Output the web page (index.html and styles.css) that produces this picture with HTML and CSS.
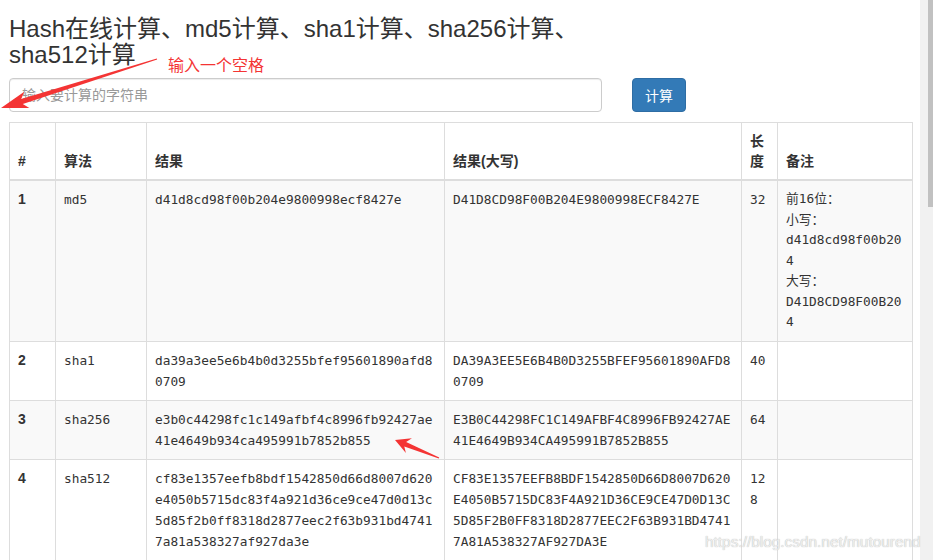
FILE: index.html
```html
<!DOCTYPE html>
<html lang="zh">
<head>
<meta charset="utf-8">
<title>Hash在线计算</title>
<link rel="stylesheet" href="styles.css">
</head>
<body>
<div class="page">
  <h3 class="title">Hash在线计算、md5计算、sha1计算、sha256计算、sha512计算</h3>
  <div class="form-row">
    <input class="text-input" type="text" placeholder="输入要计算的字符串">
    <button class="btn" type="button">计算</button>
  </div>
  <table class="hash-table">
    <colgroup>
      <col class="c-num">
      <col class="c-alg">
      <col class="c-res">
      <col class="c-up">
      <col class="c-len">
      <col class="c-note">
    </colgroup>
    <thead>
      <tr><th>#</th><th>算法</th><th>结果</th><th>结果(大写)</th><th>长度</th><th>备注</th></tr>
    </thead>
    <tbody>
      <tr class="odd">
        <th>1</th>
        <td>md5</td>
        <td>d41d8cd98f00b204e9800998ecf8427e</td>
        <td>D41D8CD98F00B204E9800998ECF8427E</td>
        <td>32</td>
        <td class="remark">前16位：<br>小写：<br>d41d8cd98f00b204<br>大写：<br>D41D8CD98F00B204</td>
      </tr>
      <tr>
        <th>2</th>
        <td>sha1</td>
        <td>da39a3ee5e6b4b0d3255bfef95601890afd80709</td>
        <td>DA39A3EE5E6B4B0D3255BFEF95601890AFD80709</td>
        <td>40</td>
        <td></td>
      </tr>
      <tr class="odd">
        <th>3</th>
        <td>sha256</td>
        <td>e3b0c44298fc1c149afbf4c8996fb92427ae41e4649b934ca495991b7852b855</td>
        <td>E3B0C44298FC1C149AFBF4C8996FB92427AE41E4649B934CA495991B7852B855</td>
        <td>64</td>
        <td></td>
      </tr>
      <tr>
        <th>4</th>
        <td>sha512</td>
        <td>cf83e1357eefb8bdf1542850d66d8007d620e4050b5715dc83f4a921d36ce9ce47d0d13c5d85f2b0ff8318d2877eec2f63b931bd47417a81a538327af927da3e</td>
        <td>CF83E1357EEFB8BDF1542850D66D8007D620E4050B5715DC83F4A921D36CE9CE47D0D13C5D85F2B0FF8318D2877EEC2F63B931BD47417A81A538327AF927DA3E</td>
        <td>128</td>
        <td></td>
      </tr>
    </tbody>
  </table>

  <div class="scrollbar"><div class="thumb"></div></div>
  <div class="note-label">输入一个空格</div>
  <svg class="arrows" width="933" height="560" viewBox="0 0 933 560" aria-hidden="true">
    <polygon points="0,-0.6 141.5,-2.6 136.5,-8.5 163.5,0 136.5,8.5 141.5,2.6 0,0.6" transform="translate(157 59) rotate(162.56)" fill="#f43434"/>
    <polygon points="0,-0.6 36.5,-2.4 32.5,-8 47.5,0 32.5,8 36.5,2.4 0,0.6" transform="translate(439 458) rotate(202.25)" fill="#f43434"/>
  </svg>
  <div class="watermark">https://blog.csdn.net/mutourend</div>
</div>
</body>
</html>
```

FILE: styles.css
```css
html, body {
  margin: 0;
  padding: 0;
  background: #fff;
}

body {
  font-family: "Liberation Sans", "Noto Sans CJK SC", Arial, sans-serif;
  font-size: 14px;
  line-height: 20px;
  color: #333;
  overflow: hidden;
}

.page {
  position: relative;
  width: 933px;
  height: 560px;
  box-sizing: border-box;
  padding: 16px 0 0 9px;
  overflow: hidden;
}

.title {
  margin: 0 0 10px;
  width: 620px;
  font-size: 24px;
  line-height: 26px;
  font-weight: normal;
  color: #333;
}

.form-row {
  display: flex;
  align-items: center;
  gap: 30px;
}

.text-input {
  width: 593px;
  height: 34px;
  box-sizing: border-box;
  margin: 0;
  padding: 6px 12px;
  border: 1px solid #ccc;
  border-radius: 4px;
  box-shadow: inset 0 1px 1px rgba(0, 0, 0, 0.075);
  font-family: "Liberation Sans", "Noto Sans CJK SC", sans-serif;
  font-size: 14px;
  color: #555;
  background: #fff;
}

.text-input::placeholder {
  color: #999;
}

.btn {
  width: 54px;
  height: 34px;
  box-sizing: border-box;
  margin: 0;
  padding: 0;
  border: 1px solid #2e6da4;
  border-radius: 4px;
  background: #337ab7;
  color: #fff;
  font-family: "Liberation Sans", "Noto Sans CJK SC", sans-serif;
  font-size: 14px;
}

.hash-table {
  margin-top: 10px;
  width: 903px;
  table-layout: fixed;
  border-collapse: collapse;
  border: 1px solid #ddd;
}

.c-num { width: 46px; }
.c-alg { width: 91px; }
.c-res { width: 298px; }
.c-up { width: 297px; }
.c-len { width: 36px; }
.c-note { width: 135px; }

.hash-table th,
.hash-table td {
  padding: 8px;
  border: 1px solid #ddd;
  vertical-align: top;
  text-align: left;
  word-break: break-all;
}

.hash-table th {
  font-family: "Liberation Sans", "Noto Sans CJK SC", sans-serif;
  font-size: 14px;
  font-weight: bold;
  line-height: 20px;
}

.hash-table thead th {
  vertical-align: bottom;
  border-bottom: 2px solid #ddd;
}

.hash-table td {
  font-family: "DejaVu Sans Mono", "Noto Sans CJK SC", monospace;
  font-size: 12.8px;
  line-height: 21px;
}

.hash-table td.remark {
  line-height: 20.57px;
}

.hash-table tbody tr.odd {
  background: #f9f9f9;
}

.note-label {
  position: absolute;
  left: 168px;
  top: 54px;
  font-family: "Noto Sans CJK SC", sans-serif;
  font-size: 16px;
  line-height: 20px;
  color: #f43434;
}

.arrows {
  position: absolute;
  left: 0;
  top: 0;
  pointer-events: none;
}

.watermark {
  position: absolute;
  left: 705px;
  top: 532px;
  font-family: "Liberation Sans", sans-serif;
  font-size: 15.4px;
  line-height: 20px;
  color: #eee;
  text-shadow: 0 0 1px #aaa;
}

.scrollbar {
  position: absolute;
  left: 920px;
  top: 0;
  width: 13px;
  height: 560px;
  background: #f1f1f1;
}

.thumb {
  margin-left: 8px;
  width: 5px;
  height: 207px;
  background: #c1c1c1;
}
```
